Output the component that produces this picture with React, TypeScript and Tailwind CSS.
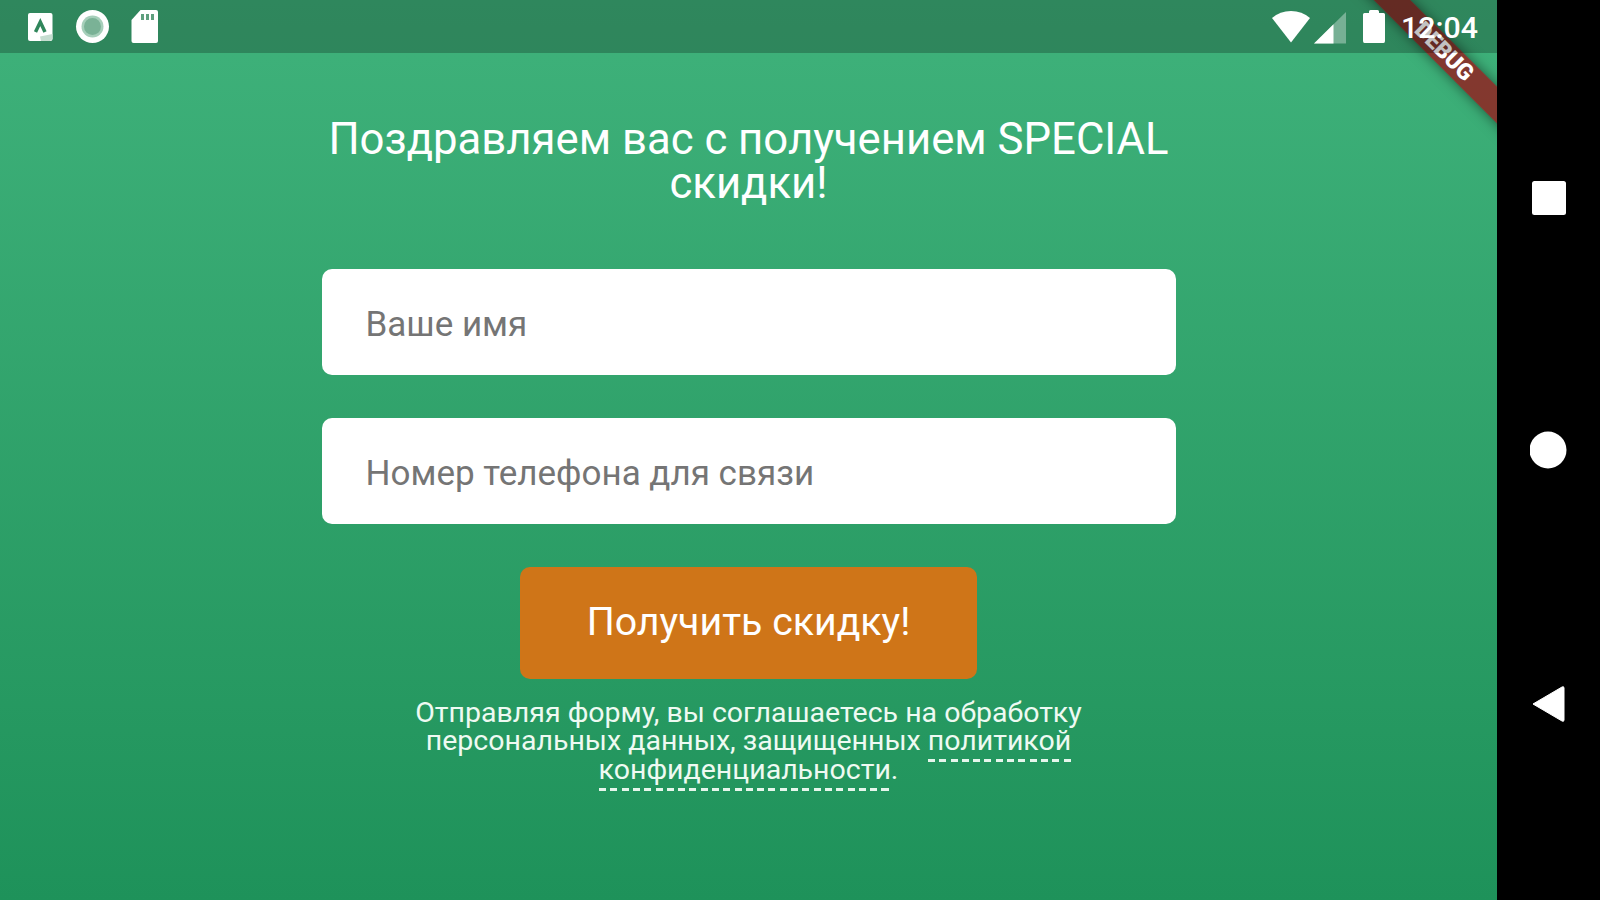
import React from "react";

const BatteryIcon = () => (
  <svg width="22" height="34" viewBox="0 0 22 34" fill="#fff">
    <path d="M6 3V1.5Q6 0 7.500 0H14.500Q16 0 16 1.500V3H20.500Q22 3 22 4.500V31Q22 33 20.500 33H1.500Q0 33 0 31V4.500Q0 3 1.500 3Z" />
  </svg>
);

const WifiIcon = () => (
  <svg width="38" height="34" viewBox="0 0 40 34" preserveAspectRatio="none" fill="#fff">
    <path d="M0 8Q8.500 1 20 1T40 8L20 32.500Z" />
  </svg>
);

const SignalIcon = () => (
  <svg width="32" height="34" viewBox="0 0 32 34">
    <path d="M32 2V33.500H0Z" fill="#fff" fillOpacity="0.35" />
    <path d="M19.500 14.300V33.500H0Z" fill="#fff" />
  </svg>
);

const StatusBar = () => (
  <div className="relative z-10 flex h-[53px] items-start justify-between bg-black/24 pr-[17px] pl-7">
    <div className="flex items-start pt-[9px]">
      <svg
        className="mt-1"
        width="25"
        height="28"
        viewBox="0 0 25 28"
        fill="none"
      >
        <rect width="24.500" height="28" rx="2" fill="#fff" />
        <path d="M12 23.500L24.500 21V26L22 28H13Z" fill="#c5ddd0" />
        <path
          d="M7.500 19L12.300 9L17 19"
          stroke="#30865b"
          strokeWidth="3.500"
        />
      </svg>
      <svg
        className="ml-[22px]"
        width="35"
        height="35"
        viewBox="0 0 35 35"
      >
        <circle cx="17.500" cy="17.500" r="16.500" fill="#fff" />
        <circle cx="17.500" cy="17.500" r="11" fill="#a6cfba" />
        <circle cx="17.500" cy="17.500" r="8.500" fill="#7ab296" />
      </svg>
      <svg
        className="ml-[21px]"
        width="28"
        height="35"
        viewBox="0 0 28 35"
      >
        <path
          d="M9.500 1H25Q27 1 27 3V32Q27 34 25 34H2.500Q0.500 34 0.500 32V11Z"
          fill="#fff"
        />
        <path d="M10 5h3v6h-3zM15 5h3v6h-3zM20 5h3v6h-3z" fill="#5f9f7e" />
      </svg>
    </div>
    <div className="flex items-start pt-[10px]">
      <WifiIcon />
      <div className="ml-[4px]">
        <SignalIcon />
      </div>
      <div className="ml-[17px]">
        <BatteryIcon />
      </div>
      <span className="ml-4 w-[79px] text-[30.300px] leading-[35px] font-medium whitespace-nowrap text-white">
        12:04
      </span>
    </div>
  </div>
);

const DebugBanner = () => (
  <div className="absolute top-[37px] left-[1318px] flex h-[26px] w-[248px] rotate-45 items-center justify-center bg-[#9a1218]/76 text-[23px] font-black text-white shadow-[0_0_13px_rgba(0,0,0,0.5)]">
    <span className="pl-[5px] tracking-[-0.3px]">DEBUG</span>
  </div>
);

interface FieldProps {
  placeholder: string;
  className: string;
}

const Field: React.FC<FieldProps> = ({ placeholder, className }) => (
  <input
    type="text"
    placeholder={placeholder}
    className={`h-[106px] w-[854px] rounded-[10px] bg-white px-11 pt-1 text-[35px] text-[#757575] outline-none placeholder:text-[#757575] placeholder:opacity-100 ${className}`}
  />
);

const dashed =
  "inline-block h-[35px] bg-[repeating-linear-gradient(90deg,#e6f6ec_0_7px,transparent_7px_11.3px)] bg-[length:100%_3px] bg-bottom bg-no-repeat";

const NavigationBar = () => (
  <div className="flex w-[103px] flex-col items-center bg-black">
    <svg className="mt-[180px]" width="36" height="36" viewBox="0 0 36 36">
      <rect x="1" y="1" width="34" height="34" rx="2.500" fill="#fff" />
    </svg>
    <svg className="mt-[215px]" width="38" height="38" viewBox="0 0 38 38">
      <circle cx="18" cy="19" r="18.500" fill="#fff" />
    </svg>
    <svg className="mt-[215px]" width="34" height="40" viewBox="0 0 34 40">
      <path
        d="M1 20L30 3Q32 2 32 4V36Q32 38 30 37Z"
        fill="#fff"
        stroke="#fff"
        strokeLinejoin="round"
      />
    </svg>
  </div>
);

export default function App() {
  return (
    <div className="flex h-[900px] w-[1600px] overflow-hidden bg-black font-['Roboto',sans-serif]">
      <div className="relative flex w-[1497px] flex-col overflow-hidden bg-linear-to-b from-[#3fb27b] to-[#1e925a]">
        <DebugBanner />
        <StatusBar />
        <main className="flex flex-col items-center text-white">
          <h1 className="mt-[64px] text-center text-[43.700px] leading-[44px] whitespace-nowrap">
            Поздравляем вас с получением SPECIAL
            <br />
            скидки!
          </h1>
          <Field placeholder="Ваше имя" className="mt-16" />
          <Field
            placeholder="Номер телефона для связи"
            className="mt-[43px]"
          />
          <button className="mt-[43px] h-[112px] w-[457px] rounded-[10px] bg-[#cf7518] pb-[2px] text-[39.300px] whitespace-nowrap">
            Получить скидку!
          </button>
          <p className="mt-5 text-center text-[28.500px] leading-[28.300px] whitespace-nowrap text-[#eefaf2]">
            <span className="block h-[28.300px]">
              Отправляя форму, вы соглашаетесь на обработку
            </span>
            <span className="block h-[28.300px]">
              персональных данных, защищенных{" "}
              <a className={dashed}>политикой</a>
            </span>
            <span className="block h-[28.300px]">
              <a className={dashed}>конфиденциальности</a>.
            </span>
          </p>
        </main>
      </div>
      <NavigationBar />
    </div>
  );
}
